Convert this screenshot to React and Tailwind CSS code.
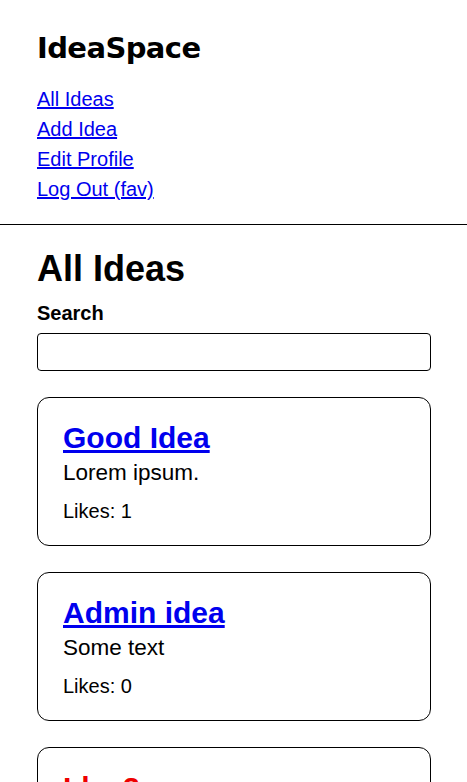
export default function App() {
  const ideas = [
    { title: 'Good Idea', text: 'Lorem ipsum.', likes: 1, color: 'text-[#0000ee]' },
    { title: 'Admin idea', text: 'Some text', likes: 0, color: 'text-[#0000ee]' },
    { title: 'Idea3', text: 'Another idea', likes: 0, color: 'text-[#ee0000]' },
  ];

  return (
    <div className="min-h-screen bg-white text-black font-['Liberation_Sans',Arial,sans-serif]">
      <header className="px-[37px] pt-[30px] pb-[20px]">
        <div className="text-[29px] font-bold tracking-[-0.6px] leading-[36px] font-['DejaVu_Sans',sans-serif]">
          IdeaSpace
        </div>
        <nav className="mt-[18px] flex flex-col items-start text-[20px] leading-[30px]">
          <a href="#" className="text-[#0000ee] underline">All Ideas</a>
          <a href="#" className="text-[#0000ee] underline">Add Idea</a>
          <a href="#" className="text-[#0000ee] underline">Edit Profile</a>
          <a href="#" className="text-[#0000ee] underline">Log Out (fav)</a>
        </nav>
      </header>
      <hr className="border-t border-black" />
      <main className="px-[37px]">
        <h1 className="text-[36px] font-bold leading-[44px] mt-[22px]">All Ideas</h1>
        <label className="block mt-[10px] text-[20px] font-bold leading-[24px]">Search</label>
        <input
          type="text"
          className="block w-[394px] h-[38px] mt-[8px] border border-black rounded-[4px] px-2"
        />
        <div className="mt-[26px] flex flex-col gap-[26px]">
          {ideas.map((idea) => (
            <div key={idea.title} className="w-[394px] border border-black rounded-[12px] px-[25px] pt-[22px] pb-[22px]">
              <a href="#" className={`block text-[30px] font-bold underline leading-[36px] ${idea.color}`}>
                {idea.title}
              </a>
              <p className="text-[22.5px] leading-[28px] mt-[3px]">{idea.text}</p>
              <p className="text-[20px] leading-[24px] mt-[12px]">Likes: {idea.likes}</p>
            </div>
          ))}
        </div>
      </main>
    </div>
  );
}
